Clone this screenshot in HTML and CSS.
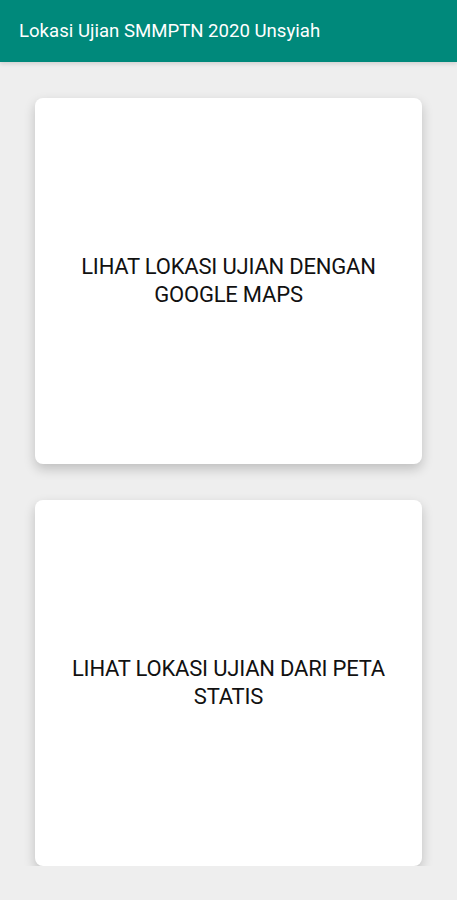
FILE: index.html
```html
<!DOCTYPE html>
<html lang="en">
<head>
    <meta charset="UTF-8">
    <meta name="viewport" content="width=device-width, initial-scale=1.0">
    <title>Lokasi Ujian SMMPTN 2020 Unsyiah</title>
    <link rel="stylesheet" href="styles.css">
</head>
<body>
    <header class="app-bar">
        <h1 class="app-title">Lokasi Ujian SMMPTN 2020 Unsyiah</h1>
    </header>

    <main class="menu">
        <div class="menu-card">
            <span class="menu-label">LIHAT LOKASI UJIAN DENGAN GOOGLE MAPS</span>
        </div>
        <div class="menu-card">
            <span class="menu-label">LIHAT LOKASI UJIAN DARI PETA STATIS</span>
        </div>
    </main>
</body>
</html>
```
FILE: styles.css
```css
body {
    font-family: Roboto, 'Noto Sans', sans-serif;
    background-color: #eeeeee;
    margin: 0;
    padding: 0;
}

.app-bar {
    background-color: #00897b;
    color: #fff;
    height: 62px;
    display: flex;
    align-items: center;
    padding: 0 19px;
    box-shadow: 0 2px 4px rgba(0, 0, 0, 0.12);
}

.app-title {
    margin: 0;
    font-size: 18.6px;
    font-weight: 400;
}

.menu {
    display: flex;
    flex-direction: column;
    gap: 36px;
    padding: 36px 35px 0 35px;
}

.menu-card {
    background-color: #fff;
    border-radius: 8px;
    box-shadow: 0 5px 12px rgba(0, 0, 0, 0.2);
    height: 366px;
    display: flex;
    align-items: center;
    justify-content: center;
    padding: 0 30px;
    text-align: center;
}

.menu-label {
    font-size: 22px;
    line-height: 28px;
    color: #111;
    letter-spacing: -0.2px;
}
```
